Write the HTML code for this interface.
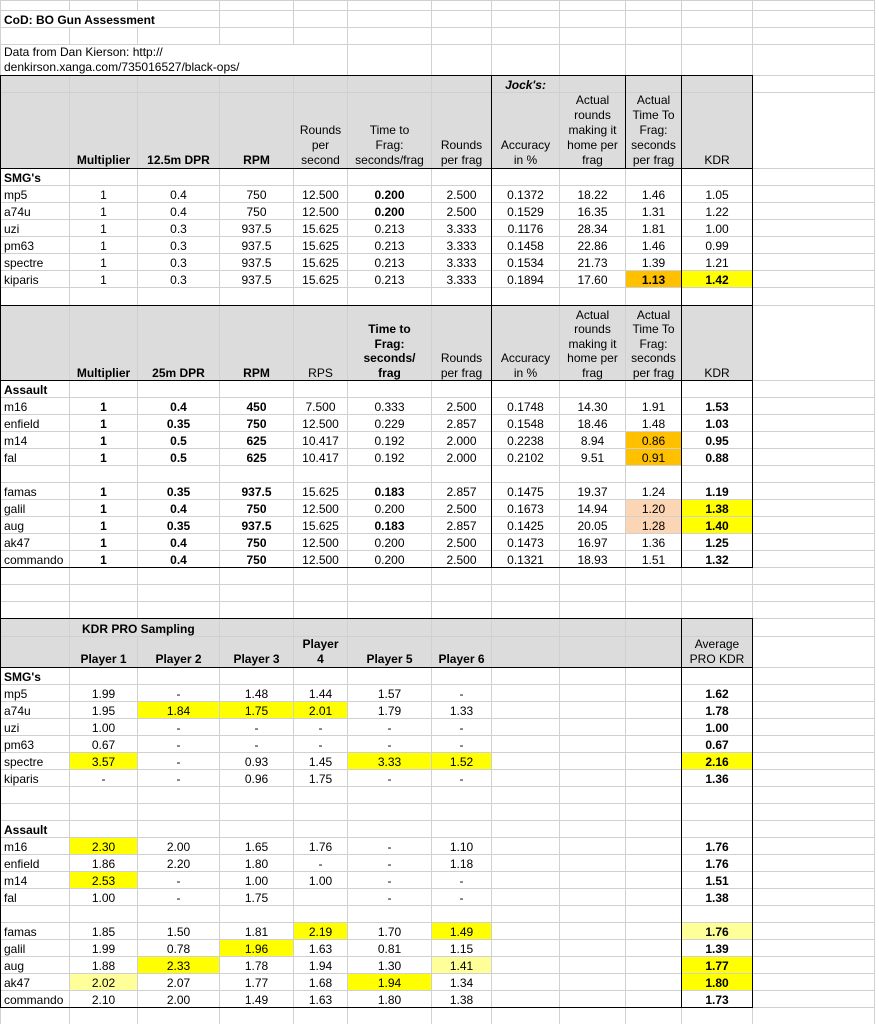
<!DOCTYPE html>
<html><head><meta charset="utf-8">
<style>
html,body{margin:0;padding:0;background:#fff;width:879px;height:1024px;overflow:hidden}
body{position:relative;font-family:"Liberation Sans",Arial,sans-serif;font-size:12px;color:#000}
table{position:absolute;left:0;top:0;border-collapse:collapse;table-layout:fixed;width:874px}
td{border:1px solid #d0d0d0;padding:0 1px;text-align:center;vertical-align:bottom;line-height:13px;white-space:nowrap;overflow:hidden}
td.n{text-align:left;padding-left:3px}
td.h{line-height:15px;white-space:normal}
tr.s2 td.h{line-height:14.5px}
tr.g td{background:#dcdcdc}
tr.g td.w{background:#fff}
.b{font-weight:bold}
.y{background:#ffff00}
.o{background:#ffc000}
.p{background:#fcd5b4}
.ly{background:#ffff99}
.k{position:absolute;background:#000}
</style></head><body>
<table>
<colgroup>
<col style="width:69px"><col style="width:68px"><col style="width:82px"><col style="width:74px"><col style="width:54px"><col style="width:84px"><col style="width:60px"><col style="width:68px"><col style="width:66px"><col style="width:56px"><col style="width:71px"><col style="width:122px">
</colgroup>
<tr style="height:10px"><td></td><td></td><td></td><td></td><td></td><td></td><td></td><td></td><td></td><td></td><td></td><td></td></tr>
<tr style="height:17px"><td class="n b" colspan="3" style="overflow:visible">CoD: BO Gun Assessment</td><td></td><td></td><td></td><td></td><td></td><td></td><td></td><td></td><td></td></tr>
<tr style="height:17px"><td></td><td></td><td></td><td></td><td></td><td></td><td></td><td></td><td></td><td></td><td></td><td></td></tr>
<tr style="height:31px"><td class="n h" colspan="5" style="line-height:15px;white-space:nowrap">Data from Dan Kierson: http://<br>denkirson.xanga.com/735016527/black-ops/</td><td></td><td></td><td></td><td></td><td></td><td></td><td></td></tr>
<tr class="g" style="height:17px"><td></td><td></td><td></td><td></td><td></td><td></td><td></td><td class="b" style="font-style:italic">Jock's:</td><td></td><td></td><td></td><td class="w"></td></tr>
<tr class="g" style="height:76px"><td></td><td class="b h">Multiplier</td><td class="b h">12.5m DPR</td><td class="b h">RPM</td><td class="h">Rounds<br>per<br>second</td><td class="h">Time to<br>Frag:<br>seconds/frag</td><td class="h">Rounds<br>per frag</td><td class="h">Accuracy<br>in %</td><td class="h">Actual<br>rounds<br>making it<br>home per<br>frag</td><td class="h">Actual<br>Time To<br>Frag:<br>seconds<br>per frag</td><td class="h">KDR</td><td class="w"></td></tr>
<tr style="height:17px"><td class="n b">SMG's</td><td></td><td></td><td></td><td></td><td></td><td></td><td></td><td></td><td></td><td></td><td></td></tr>
<tr style="height:17px"><td class="n">mp5</td><td>1</td><td>0.4</td><td>750</td><td>12.500</td><td class="b">0.200</td><td>2.500</td><td>0.1372</td><td>18.22</td><td>1.46</td><td>1.05</td><td></td></tr>
<tr style="height:17px"><td class="n">a74u</td><td>1</td><td>0.4</td><td>750</td><td>12.500</td><td class="b">0.200</td><td>2.500</td><td>0.1529</td><td>16.35</td><td>1.31</td><td>1.22</td><td></td></tr>
<tr style="height:17px"><td class="n">uzi</td><td>1</td><td>0.3</td><td>937.5</td><td>15.625</td><td>0.213</td><td>3.333</td><td>0.1176</td><td>28.34</td><td>1.81</td><td>1.00</td><td></td></tr>
<tr style="height:17px"><td class="n">pm63</td><td>1</td><td>0.3</td><td>937.5</td><td>15.625</td><td>0.213</td><td>3.333</td><td>0.1458</td><td>22.86</td><td>1.46</td><td>0.99</td><td></td></tr>
<tr style="height:17px"><td class="n">spectre</td><td>1</td><td>0.3</td><td>937.5</td><td>15.625</td><td>0.213</td><td>3.333</td><td>0.1534</td><td>21.73</td><td>1.39</td><td>1.21</td><td></td></tr>
<tr style="height:17px"><td class="n">kiparis</td><td>1</td><td>0.3</td><td>937.5</td><td>15.625</td><td>0.213</td><td>3.333</td><td>0.1894</td><td>17.60</td><td class="b o">1.13</td><td class="b y">1.42</td><td></td></tr>
<tr style="height:18px"><td></td><td></td><td></td><td></td><td></td><td></td><td></td><td></td><td></td><td></td><td></td><td></td></tr>
<tr class="g s2" style="height:75px"><td></td><td class="b h">Multiplier</td><td class="b h">25m DPR</td><td class="b h">RPM</td><td class="h">RPS</td><td class="b h">Time to<br>Frag:<br>seconds/<br>frag</td><td class="h">Rounds<br>per frag</td><td class="h">Accuracy<br>in %</td><td class="h">Actual<br>rounds<br>making it<br>home per<br>frag</td><td class="h">Actual<br>Time To<br>Frag:<br>seconds<br>per frag</td><td class="h">KDR</td><td class="w"></td></tr>
<tr style="height:17px"><td class="n b">Assault</td><td></td><td></td><td></td><td></td><td></td><td></td><td></td><td></td><td></td><td></td><td></td></tr>
<tr style="height:17px"><td class="n">m16</td><td class="b">1</td><td class="b">0.4</td><td class="b">450</td><td>7.500</td><td>0.333</td><td>2.500</td><td>0.1748</td><td>14.30</td><td>1.91</td><td class="b">1.53</td><td></td></tr>
<tr style="height:17px"><td class="n">enfield</td><td class="b">1</td><td class="b">0.35</td><td class="b">750</td><td>12.500</td><td>0.229</td><td>2.857</td><td>0.1548</td><td>18.46</td><td>1.48</td><td class="b">1.03</td><td></td></tr>
<tr style="height:17px"><td class="n">m14</td><td class="b">1</td><td class="b">0.5</td><td class="b">625</td><td>10.417</td><td>0.192</td><td>2.000</td><td>0.2238</td><td>8.94</td><td class="o">0.86</td><td class="b">0.95</td><td></td></tr>
<tr style="height:17px"><td class="n">fal</td><td class="b">1</td><td class="b">0.5</td><td class="b">625</td><td>10.417</td><td>0.192</td><td>2.000</td><td>0.2102</td><td>9.51</td><td class="o">0.91</td><td class="b">0.88</td><td></td></tr>
<tr style="height:17px"><td></td><td></td><td></td><td></td><td></td><td></td><td></td><td></td><td></td><td></td><td></td><td></td></tr>
<tr style="height:17px"><td class="n">famas</td><td class="b">1</td><td class="b">0.35</td><td class="b">937.5</td><td>15.625</td><td class="b">0.183</td><td>2.857</td><td>0.1475</td><td>19.37</td><td>1.24</td><td class="b">1.19</td><td></td></tr>
<tr style="height:17px"><td class="n">galil</td><td class="b">1</td><td class="b">0.4</td><td class="b">750</td><td>12.500</td><td>0.200</td><td>2.500</td><td>0.1673</td><td>14.94</td><td class="p">1.20</td><td class="b y">1.38</td><td></td></tr>
<tr style="height:17px"><td class="n">aug</td><td class="b">1</td><td class="b">0.35</td><td class="b">937.5</td><td>15.625</td><td class="b">0.183</td><td>2.857</td><td>0.1425</td><td>20.05</td><td class="p">1.28</td><td class="b y">1.40</td><td></td></tr>
<tr style="height:17px"><td class="n">ak47</td><td class="b">1</td><td class="b">0.4</td><td class="b">750</td><td>12.500</td><td>0.200</td><td>2.500</td><td>0.1473</td><td>16.97</td><td>1.36</td><td class="b">1.25</td><td></td></tr>
<tr style="height:17px"><td class="n">commando</td><td class="b">1</td><td class="b">0.4</td><td class="b">750</td><td>12.500</td><td>0.200</td><td>2.500</td><td>0.1321</td><td>18.93</td><td>1.51</td><td class="b">1.32</td><td></td></tr>
<tr style="height:17px"><td></td><td></td><td></td><td></td><td></td><td></td><td></td><td></td><td></td><td></td><td></td><td></td></tr>
<tr style="height:17px"><td></td><td></td><td></td><td></td><td></td><td></td><td></td><td></td><td></td><td></td><td></td><td></td></tr>
<tr style="height:17px"><td></td><td></td><td></td><td></td><td></td><td></td><td></td><td></td><td></td><td></td><td></td><td></td></tr>
<tr class="g" style="height:18px"><td></td><td class="b" colspan="2" style="text-align:left;padding-left:12px">KDR PRO Sampling</td><td></td><td></td><td></td><td></td><td></td><td></td><td></td><td></td><td class="w"></td></tr>
<tr class="g" style="height:31px"><td></td><td class="b h">Player 1</td><td class="b h">Player 2</td><td class="b h">Player 3</td><td class="b h">Player<br>4</td><td class="b h">Player 5</td><td class="b h">Player 6</td><td></td><td></td><td></td><td class="h">Average<br>PRO KDR</td><td class="w"></td></tr>
<tr style="height:17px"><td class="n b">SMG's</td><td></td><td></td><td></td><td></td><td></td><td></td><td></td><td></td><td></td><td></td><td></td></tr>
<tr style="height:17px"><td class="n">mp5</td><td>1.99</td><td>-</td><td>1.48</td><td>1.44</td><td>1.57</td><td>-</td><td></td><td></td><td></td><td class="b">1.62</td><td></td></tr>
<tr style="height:17px"><td class="n">a74u</td><td>1.95</td><td class="y">1.84</td><td class="y">1.75</td><td class="y">2.01</td><td>1.79</td><td>1.33</td><td></td><td></td><td></td><td class="b">1.78</td><td></td></tr>
<tr style="height:17px"><td class="n">uzi</td><td>1.00</td><td>-</td><td>-</td><td>-</td><td>-</td><td>-</td><td></td><td></td><td></td><td class="b">1.00</td><td></td></tr>
<tr style="height:17px"><td class="n">pm63</td><td>0.67</td><td>-</td><td>-</td><td>-</td><td>-</td><td>-</td><td></td><td></td><td></td><td class="b">0.67</td><td></td></tr>
<tr style="height:17px"><td class="n">spectre</td><td class="y">3.57</td><td>-</td><td>0.93</td><td>1.45</td><td class="y">3.33</td><td class="y">1.52</td><td></td><td></td><td></td><td class="b y">2.16</td><td></td></tr>
<tr style="height:17px"><td class="n">kiparis</td><td>-</td><td>-</td><td>0.96</td><td>1.75</td><td>-</td><td>-</td><td></td><td></td><td></td><td class="b">1.36</td><td></td></tr>
<tr style="height:17px"><td></td><td></td><td></td><td></td><td></td><td></td><td></td><td></td><td></td><td></td><td></td><td></td></tr>
<tr style="height:17px"><td></td><td></td><td></td><td></td><td></td><td></td><td></td><td></td><td></td><td></td><td></td><td></td></tr>
<tr style="height:17px"><td class="n b">Assault</td><td></td><td></td><td></td><td></td><td></td><td></td><td></td><td></td><td></td><td></td><td></td></tr>
<tr style="height:17px"><td class="n">m16</td><td class="y">2.30</td><td>2.00</td><td>1.65</td><td>1.76</td><td>-</td><td>1.10</td><td></td><td></td><td></td><td class="b">1.76</td><td></td></tr>
<tr style="height:17px"><td class="n">enfield</td><td>1.86</td><td>2.20</td><td>1.80</td><td>-</td><td>-</td><td>1.18</td><td></td><td></td><td></td><td class="b">1.76</td><td></td></tr>
<tr style="height:17px"><td class="n">m14</td><td class="y">2.53</td><td>-</td><td>1.00</td><td>1.00</td><td>-</td><td>-</td><td></td><td></td><td></td><td class="b">1.51</td><td></td></tr>
<tr style="height:17px"><td class="n">fal</td><td>1.00</td><td>-</td><td>1.75</td><td></td><td>-</td><td>-</td><td></td><td></td><td></td><td class="b">1.38</td><td></td></tr>
<tr style="height:17px"><td></td><td></td><td></td><td></td><td></td><td></td><td></td><td></td><td></td><td></td><td></td><td></td></tr>
<tr style="height:17px"><td class="n">famas</td><td>1.85</td><td>1.50</td><td>1.81</td><td class="y">2.19</td><td>1.70</td><td class="y">1.49</td><td></td><td></td><td></td><td class="b ly">1.76</td><td></td></tr>
<tr style="height:17px"><td class="n">galil</td><td>1.99</td><td>0.78</td><td class="y">1.96</td><td>1.63</td><td>0.81</td><td>1.15</td><td></td><td></td><td></td><td class="b">1.39</td><td></td></tr>
<tr style="height:17px"><td class="n">aug</td><td>1.88</td><td class="y">2.33</td><td>1.78</td><td>1.94</td><td>1.30</td><td class="ly">1.41</td><td></td><td></td><td></td><td class="b y">1.77</td><td></td></tr>
<tr style="height:17px"><td class="n">ak47</td><td class="ly">2.02</td><td>2.07</td><td>1.77</td><td>1.68</td><td class="y">1.94</td><td>1.34</td><td></td><td></td><td></td><td class="b y">1.80</td><td></td></tr>
<tr style="height:17px"><td class="n">commando</td><td>2.10</td><td>2.00</td><td>1.49</td><td>1.63</td><td>1.80</td><td>1.38</td><td></td><td></td><td></td><td class="b">1.73</td><td></td></tr>
<tr style="height:17px"><td></td><td></td><td></td><td></td><td></td><td></td><td></td><td></td><td></td><td></td><td></td><td></td></tr>
</table>

<div class="k" style="left:0;top:75px;width:1px;height:932px"></div>
<div class="k" style="left:0;top:75px;width:753px;height:1px"></div>
<div class="k" style="left:0;top:168px;width:753px;height:1px"></div>
<div class="k" style="left:491px;top:75px;width:1px;height:230px"></div>
<div class="k" style="left:625px;top:75px;width:1px;height:93px"></div>
<div class="k" style="left:681px;top:75px;width:1px;height:230px"></div>
<div class="k" style="left:752px;top:75px;width:1px;height:230px"></div>

<div class="k" style="left:0;top:305px;width:753px;height:1px"></div>
<div class="k" style="left:0;top:380px;width:753px;height:1px"></div>
<div class="k" style="left:0;top:567px;width:753px;height:1px"></div>
<div class="k" style="left:491px;top:305px;width:1px;height:262px"></div>
<div class="k" style="left:681px;top:305px;width:1px;height:262px"></div>
<div class="k" style="left:752px;top:305px;width:1px;height:262px"></div>

<div class="k" style="left:0;top:618px;width:753px;height:1px"></div>
<div class="k" style="left:0;top:667px;width:753px;height:1px"></div>
<div class="k" style="left:0;top:1007px;width:753px;height:1px"></div>
<div class="k" style="left:681px;top:618px;width:1px;height:389px"></div>
<div class="k" style="left:752px;top:618px;width:1px;height:389px"></div>
</body></html>
